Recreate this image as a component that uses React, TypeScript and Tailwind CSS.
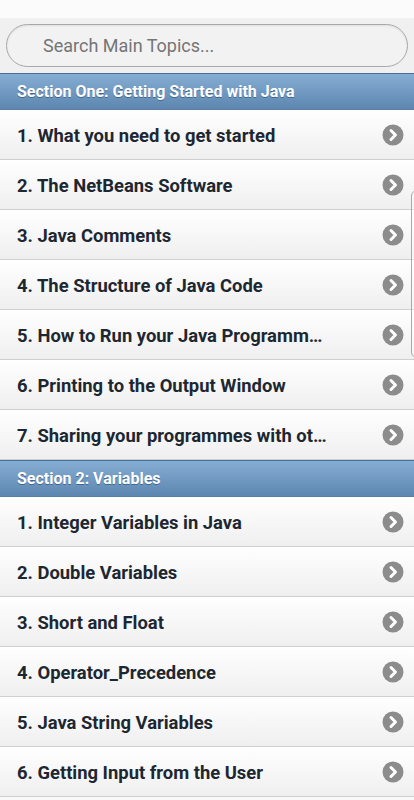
import React from 'react';

const sections = [
  {
    title: 'Section One: Getting Started with Java',
    items: [
      '1. What you need to get started',
      '2. The NetBeans Software',
      '3. Java Comments',
      '4. The Structure of Java Code',
      '5. How to Run your Java Programmes',
      '6. Printing to the Output Window',
      '7. Sharing your programmes with other people',
    ],
  },
  {
    title: 'Section 2: Variables',
    items: [
      '1. Integer Variables in Java',
      '2. Double Variables',
      '3. Short and Float',
      '4. Operator_Precedence',
      '5. Java String Variables',
      '6. Getting Input from the User',
    ],
  },
];

function Chevron() {
  return (
    <svg width="22" height="22" viewBox="0 0 22 22" className="shrink-0">
      <circle cx="11" cy="11" r="10.5" fill="#8c8c8c" />
      <path d="M9 6.5 L13.5 11 L9 15.5" fill="none" stroke="#fff" strokeWidth="3" strokeLinecap="round" strokeLinejoin="round" />
    </svg>
  );
}

export default function App() {
  return (
    <div className="relative h-[800px] bg-[#f9f9f9] font-['Roboto',sans-serif] overflow-hidden">
      <div className="h-[18px] bg-[#fbfbfb]" />
      <div className="bg-[#f0f0f0] px-[6px] pt-[6px] pb-[6px]">
        <div className="h-[43px] rounded-[22px] border border-[#a8a8a8] bg-[#f2f2f2] flex items-center pl-[36px] shadow-[inset_0_1px_2px_rgba(0,0,0,0.08)]">
          <span className="text-[18px] text-[#757575]">Search Main Topics...</span>
        </div>
      </div>

      {sections.map((s) => (
        <div key={s.title}>
          <div className="h-[37px] flex items-center px-[17px] border-t border-[#456f9a] border-b border-b-[#5a7ea4] bg-gradient-to-b from-[#86aed4] to-[#5d86b0]">
            <span className="text-[16px] font-bold text-white [text-shadow:0_1px_0_#3e6790]">{s.title}</span>
          </div>
          {s.items.map((item) => (
            <div
              key={item}
              className="h-[50px] flex items-center justify-between pl-[17px] pr-[10px] border-b border-[#cfcfcf] bg-gradient-to-b from-white to-[#efefef]"
            >
              <span className="text-[18.4px] font-bold text-[#1d2731] truncate pr-[55px] leading-[24px] pt-[2px]">{item}</span>
              <Chevron />
            </div>
          ))}
        </div>
      ))}

      <div className="absolute left-[411px] top-[190px] w-[8px] h-[168px] rounded-l-[6px] border border-[#a9a9a9] bg-white/40" />
    </div>
  );
}
